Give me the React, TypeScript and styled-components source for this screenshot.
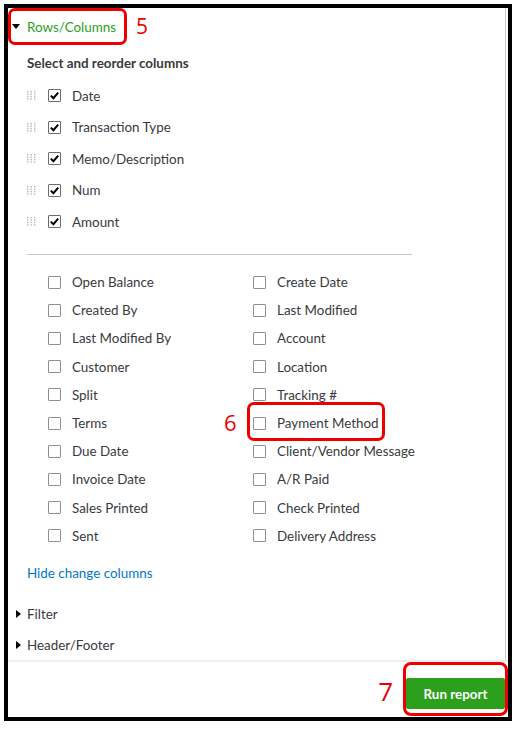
import React from 'react'
import styled, { createGlobalStyle } from 'styled-components'

const GlobalStyle = createGlobalStyle`
	html, body {
		margin: 0;
		padding: 0;
		background: #ffffff;
	}
	body {
		font-family: Lato, 'Open Sans', sans-serif;
		color: #393a3d;
	}
`

const RED = '#ee0000'
const GREEN = '#2ca01c'
const TEXT = '13.4px'

const Frame = styled.div`
	margin: 4px;
	width: 508px;
	height: 717px;
	box-sizing: border-box;
	border: 4px solid #000;
	display: flex;
	flex-direction: column;
	background: #fff;
`

const Content = styled.div`
	flex: 1;
	margin-right: 2px;
	border-right: 1px solid #c9cbcf;
	display: flex;
	flex-direction: column;
`

const TitleRow = styled.div`
	display: flex;
	align-items: center;
	height: 37px;
`

const TitleHighlight = styled.div`
	display: inline-flex;
	align-items: center;
	gap: 7px;
	height: 37px;
	box-sizing: border-box;
	padding: 0 8px 0 1px;
	border: 3px solid ${RED};
	border-radius: 7px;
`

const CaretDown = styled.span`
	width: 0;
	height: 0;
	border-left: 4px solid transparent;
	border-right: 4px solid transparent;
	border-top: 5px solid #000;
`

const CaretRight = styled.span`
	width: 0;
	height: 0;
	border-top: 4px solid transparent;
	border-bottom: 4px solid transparent;
	border-left: 5px solid #000;
`

const TitleText = styled.span`
	color: ${GREEN};
	font-size: ${TEXT};
`

const Marker = styled.span<{ $size: number }>`
	color: ${RED};
	font-family: 'Open Sans', 'Liberation Sans', sans-serif;
	font-size: ${p => p.$size}px;
	line-height: 1;
`

const TitleMarker = styled(Marker)`
	margin-left: 9px;
`

const Body = styled.div`
	padding-left: 19px;
	display: flex;
	flex-direction: column;
`

const SectionLabel = styled.div`
	margin-top: 8px;
	height: 20px;
	line-height: 20px;
	font-size: ${TEXT};
	font-weight: 700;
	color: #393a3d;
`

const ColumnList = styled.div`
	margin-top: 7px;
	display: flex;
	flex-direction: column;
`

const ColumnRow = styled.div`
	height: 31.5px;
	display: flex;
	align-items: center;
`

const GripWrap = styled.span`
	width: 21px;
	display: flex;
	align-items: center;
`

const Divider = styled.div`
	margin-top: 16.5px;
	width: 385px;
	height: 1px;
	background: #c4c6cb;
`

const OptionGrid = styled.div`
	margin-top: 13px;
	padding-left: 21px;
	display: grid;
	grid-template-columns: 205px 205px;
	grid-auto-rows: 28.2px;
`

const OptionCell = styled.div`
	position: relative;
	display: flex;
	align-items: center;
`

const CellHighlight = styled.span`
	position: absolute;
	left: -6px;
	top: -7px;
	width: 138px;
	height: 39px;
	box-sizing: border-box;
	border: 3px solid ${RED};
	border-radius: 7px;
	pointer-events: none;
`

const CellMarker = styled(Marker)`
	position: absolute;
	left: -29px;
	top: 2px;
`

const Box = styled.span<{ $checked?: boolean }>`
	width: 13px;
	height: 13px;
	box-sizing: border-box;
	border: 1px solid ${p => (p.$checked ? '#6b6c72' : '#8d9096')};
	border-radius: 1px;
	display: flex;
	align-items: center;
	justify-content: center;
	flex-shrink: 0;
	background: #fff;
`

const Label = styled.span`
	margin-left: 11px;
	font-size: ${TEXT};
	color: #393a3d;
	white-space: nowrap;
`

const HideLink = styled.a`
	margin-top: 13px;
	height: 20px;
	line-height: 20px;
	font-size: ${TEXT};
	color: #0077c5;
	text-decoration: none;
	cursor: pointer;
`

const Expanders = styled.div`
	margin-top: 15.5px;
	display: flex;
	flex-direction: column;
`

const ExpanderRow = styled.div`
	height: 31px;
	padding-left: 8px;
	display: flex;
	align-items: center;
	gap: 6px;
	font-size: ${TEXT};
	color: #393a3d;
`

const Footer = styled.div`
	height: 57px;
	box-sizing: border-box;
	border-top: 2px solid #eceef1;
	display: flex;
	justify-content: flex-end;
	align-items: flex-start;
`

const FooterMarker = styled(Marker)`
	align-self: center;
	margin-right: 10px;
	margin-top: 3px;
`

const ButtonHighlight = styled.div`
	height: 54px;
	box-sizing: border-box;
	border: 3px solid ${RED};
	border-radius: 8px;
	padding-bottom: 4px;
	display: flex;
	align-items: flex-end;
`

const RunButton = styled.button`
	width: 99px;
	height: 31px;
	border: none;
	border-radius: 2px;
	background: ${GREEN};
	color: #fff;
	font-family: Lato, 'Open Sans', sans-serif;
	font-size: ${TEXT};
	font-weight: 700;
	cursor: pointer;
`

function Grip() {
	const dots = []
	for (let r = 0; r < 4; r++) {
		for (let c = 0; c < 3; c++) {
			dots.push(<rect key={`${r}-${c}`} x={c * 3.5} y={r * 2.4} width={1.4} height={1.4} fill="#b5b8bd" />)
		}
	}
	return (
		<svg width="10" height="9" viewBox="0 0 10 9">
			{dots}
		</svg>
	)
}

function Check() {
	return (
		<svg width="11" height="11" viewBox="0 0 11 11">
			<path d="M1.8 5.6 L4.4 8.2 L9.2 2.6" fill="none" stroke="#000" strokeWidth="2" />
		</svg>
	)
}

const selected = ['Date', 'Transaction Type', 'Memo/Description', 'Num', 'Amount']

const options: [string, string][] = [
	['Open Balance', 'Create Date'],
	['Created By', 'Last Modified'],
	['Last Modified By', 'Account'],
	['Customer', 'Location'],
	['Split', 'Tracking #'],
	['Terms', 'Payment Method'],
	['Due Date', 'Client/Vendor Message'],
	['Invoice Date', 'A/R Paid'],
	['Sales Printed', 'Check Printed'],
	['Sent', 'Delivery Address'],
]

export default function App() {
	return (
		<>
			<GlobalStyle />
			<Frame>
				<Content>
					<TitleRow>
						<TitleHighlight>
							<CaretDown />
							<TitleText>Rows/Columns</TitleText>
						</TitleHighlight>
						<TitleMarker $size={21}>5</TitleMarker>
					</TitleRow>
					<Body>
						<SectionLabel>Select and reorder columns</SectionLabel>
						<ColumnList>
							{selected.map(name => (
								<ColumnRow key={name}>
									<GripWrap><Grip /></GripWrap>
									<Box $checked><Check /></Box>
									<Label>{name}</Label>
								</ColumnRow>
							))}
						</ColumnList>
						<Divider />
						<OptionGrid>
							{options.flat().map(name => (
								<OptionCell key={name}>
									{name === 'Payment Method' && (
										<>
											<CellHighlight />
											<CellMarker $size={22}>6</CellMarker>
										</>
									)}
									<Box />
									<Label>{name}</Label>
								</OptionCell>
							))}
						</OptionGrid>
						<HideLink>Hide change columns</HideLink>
					</Body>
					<Expanders>
						<ExpanderRow><CaretRight />Filter</ExpanderRow>
						<ExpanderRow><CaretRight />Header/Footer</ExpanderRow>
					</Expanders>
				</Content>
				<Footer>
					<FooterMarker $size={26}>7</FooterMarker>
					<ButtonHighlight>
						<RunButton>Run report</RunButton>
					</ButtonHighlight>
				</Footer>
			</Frame>
		</>
	)
}
